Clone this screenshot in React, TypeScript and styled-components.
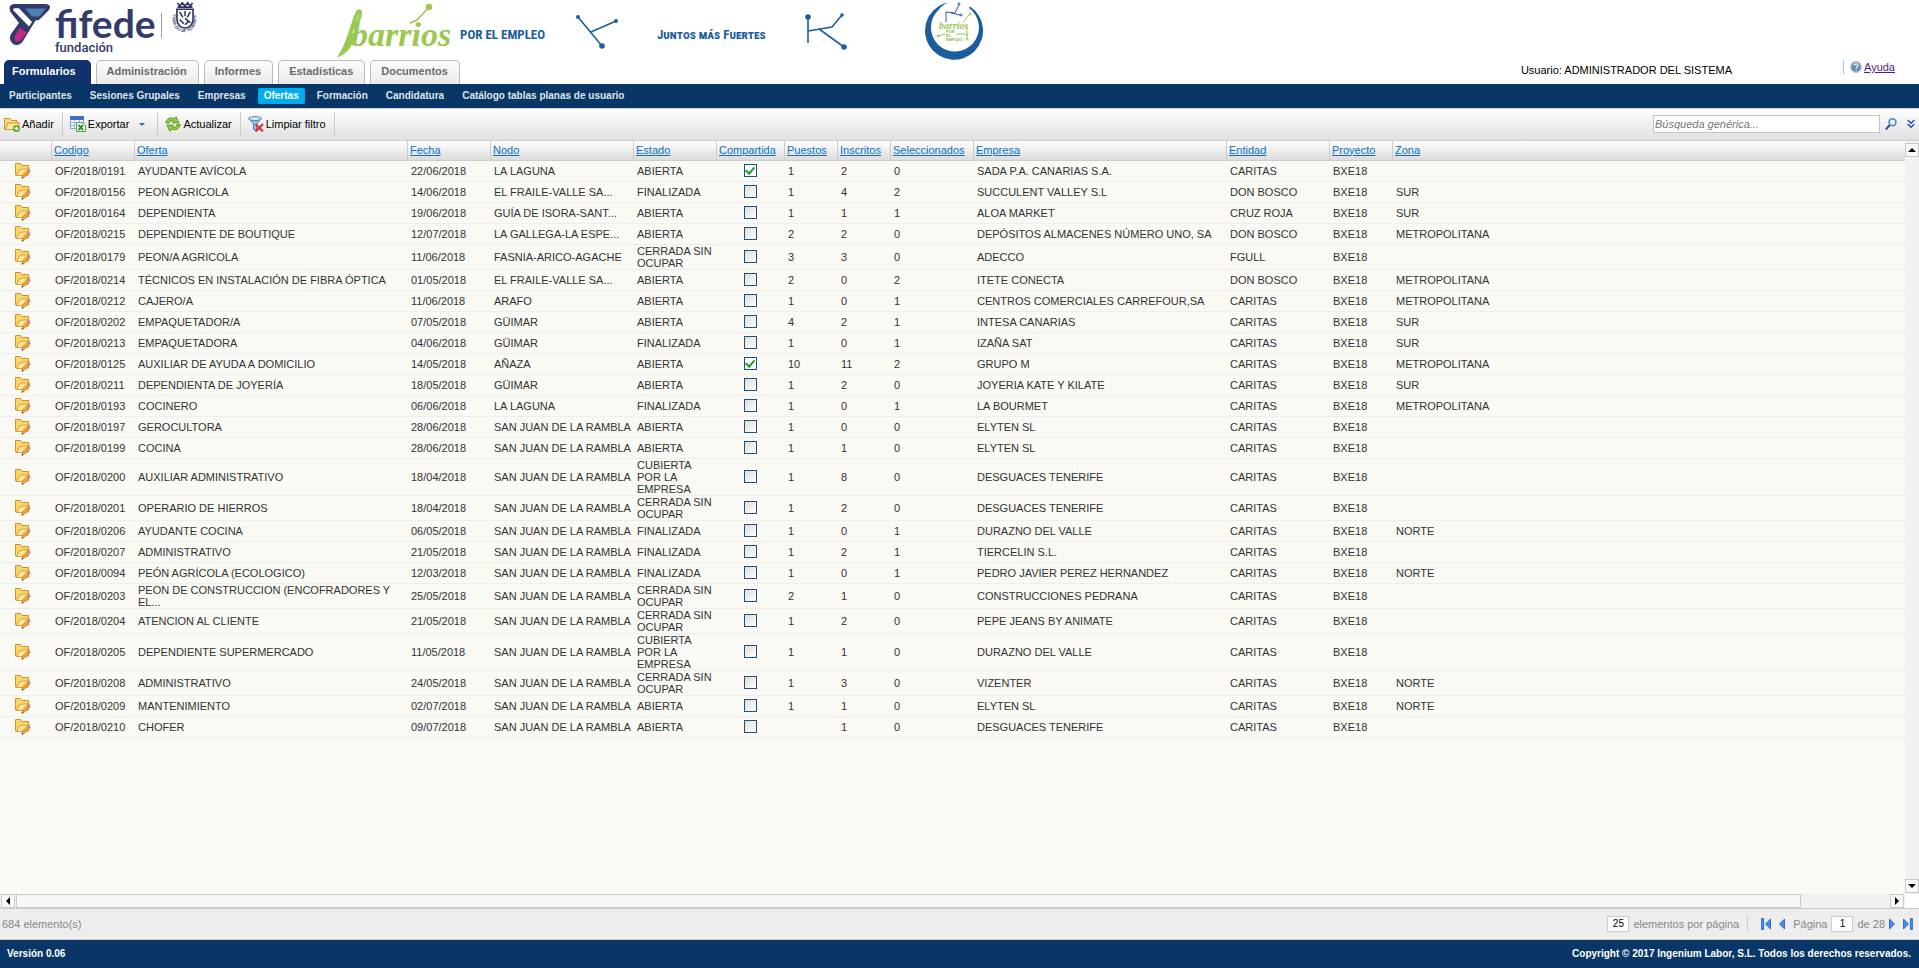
import React from "react";
import styled, { createGlobalStyle } from "styled-components";

const NAVY = "#083767";
const LINE = "#cccccc";

const GlobalStyle = createGlobalStyle`
  * { box-sizing: border-box; }
  body {
    margin: 0;
    background: #fff;
    color: #333;
    font: 11px/12px "Liberation Sans", Arial, sans-serif;
  }
  button, input { font: inherit; color: inherit; margin: 0; padding: 0; border: 0; background: none; }
  svg { display: block; flex: none; }
`;

/* ---------- page ---------- */

const Page = styled.div`
  display: flex;
  flex-direction: column;
  min-height: 100vh;
`;

const BrandBar = styled.header`
  display: flex;
  align-items: flex-start;
  height: 60px;
  padding-left: 9px;
`;

const BrandName = styled.div`
  display: flex;
  flex-direction: column;
  width: 104px;
  padding-top: 5px;
  margin-left: 5px;
  color: #333b6c;
`;

const BrandTitle = styled.span`
  font: bold 39px/36px Lato, sans-serif;
`;

const BrandSubtitle = styled.span`
  font: 500 13px/14px Roboto, sans-serif;
`;

const BrandRule = styled.span`
  width: 1px;
  height: 25px;
  margin: 13px 8px 0 2px;
  background: #9a9db5;
`;

const Campaign = styled.div`
  display: flex;
  align-items: flex-start;
  margin-left: 137px;
`;

const Slogan = styled.div<{ $caps?: boolean; $width: number }>`
  width: ${(p) => p.$width}px;
  margin-top: 27px;
  font: bold 13px/16px "Liberation Sans Narrow", "Roboto Condensed", "Liberation Sans", sans-serif;
  color: #1b5e9f;
  white-space: nowrap;
  font-variant-caps: ${(p) => (p.$caps ? "small-caps" : "normal")};
`;

const Spaced = styled.div<{ $before: number }>`
  margin-left: ${(p) => p.$before}px;
`;

/* ---------- navigation ---------- */

const TabBar = styled.div`
  display: flex;
  align-items: stretch;
  height: 24px;
  padding-left: 4px;
`;

const Tabs = styled.nav`
  display: flex;
  gap: 5px;
`;

const Tab = styled.a<{ $active?: boolean }>`
  display: flex;
  align-items: center;
  padding: ${(p) => (p.$active ? "0 14px 4px 7px" : "0 11px 4px 10px")};
  border: 1px solid ${(p) => (p.$active ? "#10326c" : "#bbb")};
  border-bottom: 0;
  border-radius: 5px 5px 0 0;
  background: ${(p) => (p.$active ? "#10326c" : "linear-gradient(#fdfdfd, #eaeaea)")};
  color: ${(p) => (p.$active ? "#fff" : "#6b6b6b")};
  font-weight: bold;
  text-decoration: none;
`;

const UserName = styled.div`
  margin: 4px 111px 0 auto;
  color: #000;
`;

const Help = styled.div`
  display: flex;
  align-items: center;
  height: 14px;
  margin-right: 24px;
  border-left: 1px solid #a9c3df;
  padding-left: 6px;
  gap: 2px;
`;

const HelpLink = styled.a`
  color: #551a8b;
`;

const SubNav = styled.nav`
  display: flex;
  align-items: center;
  gap: 6px;
  height: 24px;
  padding: 0 3px 1px;
  background: ${NAVY};
`;

const SubNavLink = styled.a<{ $active?: boolean }>`
  padding: 2px 6px;
  border-radius: 2px;
  background: ${(p) => (p.$active ? "#00aeef" : "transparent")};
  color: ${(p) => (p.$active ? "#fff" : "#dfe4ea")};
  font-size: 10px;
  font-weight: bold;
  text-decoration: none;
`;

/* ---------- toolbar ---------- */

const Toolbar = styled.div`
  display: flex;
  align-items: center;
  height: 33px;
  border-top: 1px solid #d4d0c8;
  border-bottom: 1px solid ${LINE};
  padding: 0 4px 1px;
  background: linear-gradient(#fff, #e0e0e0);
`;

const ToolButton = styled.button`
  display: flex;
  align-items: center;
  gap: 2px;
  height: 24px;
  padding-right: 8px;
  border-right: 1px solid ${LINE};
  margin-right: 7px;
  color: #000;
  cursor: pointer;
`;

const Caret = styled.span`
  margin: 0 4px 0 8px;
  border: 3px solid transparent;
  border-top-color: #2a62b8;
  border-bottom: 0;
`;

const SearchBox = styled.form`
  display: flex;
  align-items: center;
  margin-left: auto;
`;

const SearchInput = styled.input`
  width: 227px;
  height: 18px;
  margin-right: 5px;
  padding: 0 1px;
  border: 1px solid #c3c3c3;
  background: #fff;
  &::placeholder { color: #757575; font-style: italic; opacity: 1; }
`;

const IconButton = styled.button<{ $before?: number }>`
  display: block;
  margin-left: ${(p) => p.$before ?? 0}px;
  cursor: pointer;
`;

/* ---------- grid ---------- */

const GridArea = styled.div`
  display: flex;
  flex: 1;
  background: #faf9f4;
`;

const GridScroll = styled.div`
  flex: 1;
  min-width: 0;
  overflow: hidden;
`;

const Table = styled.table`
  width: 100%;
  table-layout: fixed;
  border-collapse: separate;
  border-spacing: 0;
`;

const Head = styled.th<{ $blank?: boolean }>`
  height: 20px;
  padding: 0 0 2px 2px;
  border-left: ${(p) => (p.$blank ? "0" : `1px solid ${LINE}`)};
  border-bottom: 1px solid ${LINE};
  background: linear-gradient(#fff, #dcdcdc);
  font-weight: normal;
  text-align: left;
  white-space: nowrap;
`;

const SortLink = styled.a`
  color: #0b70c8;
`;

const Cell = styled.td<{ $wrap?: boolean; $kind?: "icon" | "check" }>`
  height: 21px;
  padding: ${(p) => (p.$kind === "icon" ? "0 0 0 15px" : p.$kind === "check" ? "0 0 1px" : "0 0 0 4px")};
  border-bottom: 1px solid #eeeeee;
  text-align: ${(p) => (p.$kind === "check" ? "center" : "left")};
  white-space: ${(p) => (p.$wrap ? "normal" : "nowrap")};
`;

const Check = styled.input`
  display: flex;
  align-items: center;
  justify-content: center;
  appearance: none;
  width: 13px;
  height: 13px;
  margin: 0 auto;
  border: 1px solid #1c5180;
  background: linear-gradient(135deg, #dcdcd7, #fff);
  &:checked { background: #fff; }
  &:checked::after {
    content: "";
    width: 4px;
    height: 7px;
    margin-bottom: 2px;
    border: solid #21a121;
    border-width: 0 2px 2px 0;
    transform: rotate(40deg);
  }
`;

const VerticalBar = styled.div`
  display: flex;
  flex-direction: column;
  justify-content: space-between;
  width: 14px;
  padding: 2px 0 1px;
  background: #f1f1f1;
`;

const HorizontalBar = styled.div`
  display: flex;
  gap: 1px;
  height: 14px;
  padding: 0 15px 0 1px;
  background: linear-gradient(#fff, #fff) right / 14px 14px no-repeat #f1f1f1;
`;

const ScrollButton = styled.button`
  display: flex;
  align-items: center;
  justify-content: center;
  flex: none;
  width: 14px;
  height: 14px;
  border: 1px solid #c9c9c9;
  background: #f8f8f8;
`;

const ScrollTrack = styled.div`
  flex: 1;
  padding-right: 88px;
`;

const ScrollThumb = styled.div`
  height: 14px;
  border: 1px solid #c9c9c9;
  background: #f7f7f7;
`;

/* ---------- pager and footer ---------- */

const Pager = styled.div`
  display: flex;
  align-items: center;
  height: 32px;
  padding: 0 6px 1px 2px;
  border-top: 1px solid ${LINE};
  border-bottom: 1px solid ${LINE};
  background: #ededed;
  color: #888;
`;

const PagerControls = styled.div`
  display: flex;
  align-items: center;
  gap: 4px;
  margin-left: auto;
`;

const PagerField = styled.label`
  display: flex;
  align-items: center;
  gap: 4px;
`;

const PagerInput = styled.input`
  width: 22px;
  height: 16px;
  border: 1px solid ${LINE};
  background: #fff;
  color: #000;
  font-size: 10px;
  text-align: center;
`;

const PagerRule = styled.span`
  width: 1px;
  height: 17px;
  margin: 0 9px 0 4px;
  background: ${LINE};
`;

const PagerButton = styled.button`
  display: block;
  margin-right: 4px;
  &:last-child { margin-right: 0; }
`;

const Footer = styled.footer`
  display: flex;
  align-items: center;
  justify-content: space-between;
  height: 28px;
  padding: 0 8px 0 7px;
  background: ${NAVY};
  color: #fff;
  font-size: 10px;
  font-weight: bold;
`;

/* ---------- drawings ---------- */

const FifedeMark = () => (
  <svg width="41" height="46" viewBox="9 0 41 46">
    <path
      d="M14 4H46q6 1 3 6L41 18q-2 2.500-5 2.500H35.500L23 41q-4 6-10 3-5-4-2-10L19 23 10.500 12Q7.500 5 14 4z"
      fill="#333b6c"
    />
    <path d="M25 8.500H45.500L40.500 15.500q-1 1-2.500 1H32z" fill="#4a80b5" />
    <path d="M14.500 8.200H19L32 22l-3 4.500L13.500 10.500q-1-2 1-2.300z" fill="#fff" />
    <path d="M19.500 28l7.500 4.500L21 40q-3 3-6 .5-1.500-2 0-4.500z" fill="#c22a84" />
  </svg>
);

const CabildoCrest = () => (
  <svg width="30" height="40" viewBox="1 2 28 37">
    <defs>
      <path id="crest-ring" d="M4.500 15a11 12 0 1 0 20 0" />
    </defs>
    <g fill="none" stroke="#2a3060">
      <path d="M7.500 10.500h15v9.500a7.500 8 0 0 1-15 0z" strokeWidth="1.500" />
      <path d="M10 13l3 5M15 12v5M20 13l-3 5M10 20l4 4M15 19l5 4M15 25l3-3" strokeWidth="1.400" />
      <path d="M8 8.500h14M8 4.500l2 3 2.500-3 2.500 3 2.500-3 2.500 3 2-3" strokeWidth="1.500" />
    </g>
    <text fontFamily="Liberation Sans" fontSize="4" fontWeight="bold" fill="#4a5078">
      <textPath href="#crest-ring">CABILDO DE TENERIFE</textPath>
    </text>
  </svg>
);

const BarriosLogo = () => (
  <svg width="115" height="60" viewBox="336 0 115 60">
    <text x="350" y="46" fontFamily="Liberation Serif" fontSize="34" fontStyle="italic" fontWeight="bold" fill="#9bc853">
      barrios
    </text>
    <g fill="none" stroke="#9bc853" strokeLinecap="round">
      <path d="M357 12C352 20 350 38 341 53c4-2 9-10 12-18" strokeWidth="4" />
      <path d="M357 12c4-5 4 6-4 15" strokeWidth="3" />
      <path d="M409 23L416 20 428 7" strokeWidth="1.500" />
    </g>
    <circle cx="428" cy="7" r="3.200" fill="#9bc853" />
  </svg>
);

const BranchY = () => (
  <svg width="46" height="60" viewBox="573 0 46 60" fill="#1b5e9f" stroke="#1b5e9f" strokeWidth="1.600">
    <path d="M577 17L601 46M590 32L615 21" />
    <circle cx="577" cy="17" r="1.200" />
    <circle cx="615" cy="21" r="1.200" />
    <circle cx="601" cy="46" r="2" />
  </svg>
);

const BranchK = () => (
  <svg width="46" height="60" viewBox="804 0 46 60" fill="none" stroke="#1b5e9f" strokeWidth="1.600">
    <path d="M807 17V43M807 31L831 27 841 15M818 29L843 47" />
    <g fill="#1b5e9f">
      <circle cx="807" cy="17" r="2" />
      <circle cx="841" cy="15" r="1" />
      <circle cx="843" cy="47" r="2" />
    </g>
  </svg>
);

const RoundBadge = () => (
  <svg width="60" height="60" viewBox="923 0 60 60">
    <path
      d="M943 3.500A29 29 0 1 0 969 6.500L968 8A24 24 0 1 1 938 9.500Q940 6 946 3z"
      fill="#1b5e9f"
    />
    <g fill="none" stroke="#2f56a8">
      <path d="M945 22V12l9 1 4-8M950 13l9 2" />
      <circle cx="958" cy="4" r="1" />
      <circle cx="960" cy="15" r="1" />
    </g>
    <text x="938" y="29" fontFamily="Liberation Serif" fontStyle="italic" fontWeight="bold" fontSize="10" fill="#9bc853">barrios</text>
    <g fontFamily="Liberation Sans" fontWeight="bold" fill="#86bd3c">
      <text x="945" y="33" fontSize="4">POR</text>
      <text x="945" y="37" fontSize="4">EL</text>
      <text x="945" y="41" fontSize="4">EMPLEO</text>
    </g>
    <g fill="none" stroke="#9bc853">
      <path d="M962 22l7-8M937 36l7-2M955 34h11v4M966 28v8" />
      <circle cx="969" cy="14" r="1" />
      <circle cx="937" cy="36" r="1" />
      <circle cx="966" cy="39" r="1" />
    </g>
  </svg>
);

const HelpIcon = () => (
  <svg width="12" height="12" viewBox="0 0 12 12">
    <circle cx="6" cy="6" r="5.200" fill="#5d89c2" stroke="#b5bfcc" strokeWidth="1.500" />
    <path d="M4.300 4.700a1.800 1.800 0 1 1 2.500 1.600q-.7.4-.7 1.100M6.100 8.400v1" stroke="#fff" strokeWidth="1.200" fill="none" />
  </svg>
);

const AddFolderIcon = () => (
  <svg width="16" height="16" viewBox="0 0 16 16">
    <path d="M.5 13V2.500h5.500l1.500 2h5.500V13z" fill="#fbd879" stroke="#d3922c" />
    <path d="M1 13.500L4 7h11.500l-2.500 6.500z" fill="#fde9a4" stroke="#d3922c" />
    <circle cx="12.500" cy="12.500" r="3.500" fill="#58a50d" />
    <path d="M12.500 10.500v4M10.500 12.500h4" stroke="#fff" strokeWidth="1.500" />
  </svg>
);

const EditFolderIcon = () => (
  <svg width="16" height="16" viewBox="0 0 16 16">
    <path d="M.5 12V.5h5L7 2.500h6.500V12z" fill="#fbd566" stroke="#d3922c" />
    <path d="M1.500 12.500L4 7.500l3-1.500h8L12 12.500z" fill="#fde596" stroke="#d9a03c" />
    <path d="M7 15l1-3.500L13 6.500l2 2L10.300 13.500z" fill="#f2a531" stroke="#b5712c" strokeWidth=".6" />
    <path d="M12 7.500l1.300-1.300 2.300 2.300L14.300 9.800z" fill="#a98bc4" />
    <path d="M6.500 15.700l.7-2 1.300 1.300z" fill="#333" />
  </svg>
);

const ExportIcon = () => (
  <svg width="16" height="16" viewBox="0 0 16 16">
    <path d="M.5.5h13v12H.5z" fill="#fff" stroke="#7f9fd0" />
    <path d="M0 0h14v4H0z" fill="#3f6fce" />
    <path d="M0 6.500h14M0 9.500h14M4.500 4v9M9.500 4v9" stroke="#9db8de" />
    <path d="M6.500 6.500h6l3 2.500v6.500h-9z" fill="#e6f4e2" stroke="#5a9b50" />
    <path d="M8.500 9l4.500 5M13 9l-4.500 5" stroke="#268026" strokeWidth="1.800" />
  </svg>
);

const RefreshIcon = () => (
  <svg width="16" height="16" viewBox="0 0 16 16" fill="#8fd03c" stroke="#4c8f16" strokeWidth=".9" strokeLinejoin="round">
    <path d="M.8 7C1.500 2.500 5.500 1 9.500 2.500L11 .8l3 6-6.500.2 1.300-1.800C6.500 4.200 4.500 4.800 4 7z" />
    <path d="M15.200 8.500c-.7 4.500-4.700 6-8.700 4.500L5 15.200 2 9.200 8.500 9 7.200 10.800c2.300 1 4.300.4 4.800-2.300z" />
  </svg>
);

const FilterIcon = () => (
  <svg width="16" height="16" viewBox="0 0 16 16">
    <path d="M.8 2.500L5.500 8v5.500l3 1V8l4.800-5.500z" fill="#8cc4ec" stroke="#4480b8" />
    <ellipse cx="7" cy="2.600" rx="6.500" ry="1.900" fill="#d3ebfa" stroke="#4480b8" />
    <path d="M7.500 8l7.500 7.500M15 8l-7.500 7.500" stroke="#e3262a" strokeWidth="2" />
  </svg>
);

const SearchIcon = () => (
  <svg width="12" height="12" viewBox="0 0 12 12" fill="none">
    <path d="M.8 11.500l4-4.500" stroke="#224f94" strokeWidth="2" />
    <circle cx="7.500" cy="4.200" r="3.400" stroke="#3d8ac6" strokeWidth="1.600" fill="#e8f5fc" />
  </svg>
);

const ExpandIcon = () => (
  <svg width="8" height="10" viewBox="0 0 8 10" fill="none" stroke="#2746c4" strokeWidth="1.400">
    <path d="M.7 1L4 4.300 7.300 1M.7 5L4 8.300 7.300 5" />
  </svg>
);

type Dir = "up" | "down" | "left" | "right";
const arrows: Record<Dir, string> = {
  up: "M0 6L4 2l4 4z",
  down: "M0 2l4 4 4-4z",
  left: "M6 0L2 4l4 4z",
  right: "M2 0l4 4-4 4z",
};

const Arrow = ({ dir }: { dir: Dir }) => (
  <svg width="8" height="8" viewBox="0 0 8 8">
    <path d={arrows[dir]} fill="#000" />
  </svg>
);

const PageArrow = ({ back, end }: { back?: boolean; end?: boolean }) => (
  <svg width={end ? 10 : 6} height="12" viewBox={end ? "0 0 10 12" : "0 0 6 12"}>
    <g transform={back ? `translate(${end ? 10 : 6} 0) scale(-1 1)` : undefined} fill="#3f8cf0" stroke="#2358c4" strokeWidth=".8">
      <path d="M.5 1l5 5-5 5z" />
      {end && <path d="M7.400.5h2v11h-2z" />}
    </g>
  </svg>
);

/* ---------- data ---------- */

const columns: [string, number | undefined][] = [
  ["Codigo", 83],
  ["Oferta", 273],
  ["Fecha", 83],
  ["Nodo", 143],
  ["Estado", 83],
  ["Compartida", 68],
  ["Puestos", 53],
  ["Inscritos", 53],
  ["Seleccionados", 83],
  ["Empresa", 253],
  ["Entidad", 103],
  ["Proyecto", 63],
  ["Zona", undefined],
];

const RAMBLA = "SAN JUAN DE LA RAMBLA";
const SIN_OCUPAR = "CERRADA SIN OCUPAR";
const CUBIERTA = "CUBIERTA POR LA EMPRESA";

type Offer = [string, string, string, string, string, boolean, string, string, string, string, string, string];

const offers: Offer[] = [
  ["0191", "AYUDANTE AVÍCOLA", "22/06/2018", "LA LAGUNA", "ABIERTA", true, "1", "2", "0", "SADA P.A. CANARIAS S.A.", "CARITAS", ""],
  ["0156", "PEON AGRICOLA", "14/06/2018", "EL FRAILE-VALLE SA...", "FINALIZADA", false, "1", "4", "2", "SUCCULENT VALLEY S.L", "DON BOSCO", "SUR"],
  ["0164", "DEPENDIENTA", "19/06/2018", "GUÍA DE ISORA-SANT...", "ABIERTA", false, "1", "1", "1", "ALOA MARKET", "CRUZ ROJA", "SUR"],
  ["0215", "DEPENDIENTE DE BOUTIQUE", "12/07/2018", "LA GALLEGA-LA ESPE...", "ABIERTA", false, "2", "2", "0", "DEPÓSITOS ALMACENES NÚMERO UNO, SA", "DON BOSCO", "METROPOLITANA"],
  ["0179", "PEON/A AGRICOLA", "11/06/2018", "FASNIA-ARICO-AGACHE", SIN_OCUPAR, false, "3", "3", "0", "ADECCO", "FGULL", ""],
  ["0214", "TÉCNICOS EN INSTALACIÓN DE FIBRA ÓPTICA", "01/05/2018", "EL FRAILE-VALLE SA...", "ABIERTA", false, "2", "0", "2", "ITETE CONECTA", "DON BOSCO", "METROPOLITANA"],
  ["0212", "CAJERO/A", "11/06/2018", "ARAFO", "ABIERTA", false, "1", "0", "1", "CENTROS COMERCIALES CARREFOUR,SA", "CARITAS", "METROPOLITANA"],
  ["0202", "EMPAQUETADOR/A", "07/05/2018", "GÜIMAR", "ABIERTA", false, "4", "2", "1", "INTESA CANARIAS", "CARITAS", "SUR"],
  ["0213", "EMPAQUETADORA", "04/06/2018", "GÜIMAR", "FINALIZADA", false, "1", "0", "1", "IZAÑA SAT", "CARITAS", "SUR"],
  ["0125", "AUXILIAR DE AYUDA A DOMICILIO", "14/05/2018", "AÑAZA", "ABIERTA", true, "10", "11", "2", "GRUPO M", "CARITAS", "METROPOLITANA"],
  ["0211", "DEPENDIENTA DE JOYERÍA", "18/05/2018", "GÜIMAR", "ABIERTA", false, "1", "2", "0", "JOYERIA KATE Y KILATE", "CARITAS", "SUR"],
  ["0193", "COCINERO", "06/06/2018", "LA LAGUNA", "FINALIZADA", false, "1", "0", "1", "LA BOURMET", "CARITAS", "METROPOLITANA"],
  ["0197", "GEROCULTORA", "28/06/2018", RAMBLA, "ABIERTA", false, "1", "0", "0", "ELYTEN SL", "CARITAS", ""],
  ["0199", "COCINA", "28/06/2018", RAMBLA, "ABIERTA", false, "1", "1", "0", "ELYTEN SL", "CARITAS", ""],
  ["0200", "AUXILIAR ADMINISTRATIVO", "18/04/2018", RAMBLA, CUBIERTA, false, "1", "8", "0", "DESGUACES TENERIFE", "CARITAS", ""],
  ["0201", "OPERARIO DE HIERROS", "18/04/2018", RAMBLA, SIN_OCUPAR, false, "1", "2", "0", "DESGUACES TENERIFE", "CARITAS", ""],
  ["0206", "AYUDANTE COCINA", "06/05/2018", RAMBLA, "FINALIZADA", false, "1", "0", "1", "DURAZNO DEL VALLE", "CARITAS", "NORTE"],
  ["0207", "ADMINISTRATIVO", "21/05/2018", RAMBLA, "FINALIZADA", false, "1", "2", "1", "TIERCELIN S.L.", "CARITAS", ""],
  ["0094", "PEÓN AGRÍCOLA (ECOLOGICO)", "12/03/2018", RAMBLA, "FINALIZADA", false, "1", "0", "1", "PEDRO JAVIER PEREZ HERNANDEZ", "CARITAS", "NORTE"],
  ["0203", "PEON DE CONSTRUCCION (ENCOFRADORES Y EL...", "25/05/2018", RAMBLA, SIN_OCUPAR, false, "2", "1", "0", "CONSTRUCCIONES PEDRANA", "CARITAS", ""],
  ["0204", "ATENCION AL CLIENTE", "21/05/2018", RAMBLA, SIN_OCUPAR, false, "1", "2", "0", "PEPE JEANS BY ANIMATE", "CARITAS", ""],
  ["0205", "DEPENDIENTE SUPERMERCADO", "11/05/2018", RAMBLA, CUBIERTA, false, "1", "1", "0", "DURAZNO DEL VALLE", "CARITAS", ""],
  ["0208", "ADMINISTRATIVO", "24/05/2018", RAMBLA, SIN_OCUPAR, false, "1", "3", "0", "VIZENTER", "CARITAS", "NORTE"],
  ["0209", "MANTENIMIENTO", "02/07/2018", RAMBLA, "ABIERTA", false, "1", "1", "0", "ELYTEN SL", "CARITAS", "NORTE"],
  ["0210", "CHOFER", "09/07/2018", RAMBLA, "ABIERTA", false, "", "1", "0", "DESGUACES TENERIFE", "CARITAS", ""],
];

const tabs = ["Formularios", "Administración", "Informes", "Estadísticas", "Documentos"];
const sections = [
  "Participantes",
  "Sesiones Grupales",
  "Empresas",
  "Ofertas",
  "Formación",
  "Candidatura",
  "Catálogo tablas planas de usuario",
];

const OfferRow = ({ offer }: { offer: Offer }) => {
  const [num, title, date, node, state, shared, posts, enrolled, chosen, company, entity, zone] = offer;
  const code = `OF/2018/${num}`;
  return (
    <tr>
      <Cell $kind="icon">
        <IconButton type="button" aria-label={`Editar ${code}`}>
          <EditFolderIcon />
        </IconButton>
      </Cell>
      <Cell>{code}</Cell>
      <Cell $wrap>{title}</Cell>
      <Cell>{date}</Cell>
      <Cell>{node}</Cell>
      <Cell $wrap>{state}</Cell>
      <Cell $kind="check">
        <Check type="checkbox" defaultChecked={shared} aria-label={`Compartida ${code}`} />
      </Cell>
      <Cell>{posts}</Cell>
      <Cell>{enrolled}</Cell>
      <Cell>{chosen}</Cell>
      <Cell>{company}</Cell>
      <Cell>{entity}</Cell>
      <Cell>BXE18</Cell>
      <Cell>{zone}</Cell>
    </tr>
  );
};

export default function App() {
  return (
    <Page>
      <GlobalStyle />
      <BrandBar>
        <FifedeMark />
        <BrandName>
          <BrandTitle>fifede</BrandTitle>
          <BrandSubtitle>fundación</BrandSubtitle>
        </BrandName>
        <BrandRule />
        <CabildoCrest />
        <Campaign>
          <BarriosLogo />
          <Spaced $before={8}>
            <Slogan $width={78}>POR EL EMPLEO</Slogan>
          </Spaced>
          <Spaced $before={36}><BranchY /></Spaced>
          <Spaced $before={37}>
            <Slogan $caps $width={110}>Juntos más Fuertes</Slogan>
          </Spaced>
          <Spaced $before={38}><BranchK /></Spaced>
          <Spaced $before={73}><RoundBadge /></Spaced>
        </Campaign>
      </BrandBar>

      <TabBar>
        <Tabs>
          {tabs.map((t, i) => (
            <Tab key={t} href="#" $active={i === 0}>{t}</Tab>
          ))}
        </Tabs>
        <UserName>Usuario: ADMINISTRADOR DEL SISTEMA</UserName>
        <Help>
          <HelpIcon />
          <HelpLink href="#">Ayuda</HelpLink>
        </Help>
      </TabBar>

      <SubNav>
        {sections.map((s) => (
          <SubNavLink key={s} href="#" $active={s === "Ofertas"}>{s}</SubNavLink>
        ))}
      </SubNav>

      <Toolbar>
        <ToolButton type="button"><AddFolderIcon />Añadir</ToolButton>
        <ToolButton type="button"><ExportIcon />Exportar<Caret /></ToolButton>
        <ToolButton type="button"><RefreshIcon />Actualizar</ToolButton>
        <ToolButton type="button"><FilterIcon />Limpiar filtro</ToolButton>
        <SearchBox onSubmit={(e) => e.preventDefault()}>
          <SearchInput type="text" placeholder="Búsqueda genérica..." aria-label="Búsqueda genérica" />
          <IconButton type="submit" aria-label="Buscar"><SearchIcon /></IconButton>
          <IconButton type="button" aria-label="Más filtros" $before={10}><ExpandIcon /></IconButton>
        </SearchBox>
      </Toolbar>

      <GridArea>
        <GridScroll>
          <Table>
            <colgroup>
              <col style={{ width: 51 }} />
              {columns.map(([name, width]) => (
                <col key={name} style={{ width }} />
              ))}
            </colgroup>
            <thead>
              <tr>
                <Head $blank />
                {columns.map(([name]) => (
                  <Head key={name} scope="col"><SortLink href="#">{name}</SortLink></Head>
                ))}
              </tr>
            </thead>
            <tbody>
              {offers.map((o) => (
                <OfferRow key={o[0]} offer={o} />
              ))}
            </tbody>
          </Table>
        </GridScroll>
        <VerticalBar>
          <ScrollButton type="button" aria-label="Subir"><Arrow dir="up" /></ScrollButton>
          <ScrollButton type="button" aria-label="Bajar"><Arrow dir="down" /></ScrollButton>
        </VerticalBar>
      </GridArea>
      <HorizontalBar>
        <ScrollButton type="button" aria-label="Izquierda"><Arrow dir="left" /></ScrollButton>
        <ScrollTrack><ScrollThumb /></ScrollTrack>
        <ScrollButton type="button" aria-label="Derecha"><Arrow dir="right" /></ScrollButton>
      </HorizontalBar>

      <Pager>
        <span>684 elemento(s)</span>
        <PagerControls>
          <PagerField>
            <PagerInput type="text" defaultValue="25" />
            elementos por página
          </PagerField>
          <PagerRule />
          <PagerButton type="button" aria-label="Primera página"><PageArrow back end /></PagerButton>
          <PagerButton type="button" aria-label="Página anterior"><PageArrow back /></PagerButton>
          <PagerField>
            Página
            <PagerInput type="text" defaultValue="1" />
            de 28
          </PagerField>
          <PagerButton type="button" aria-label="Página siguiente"><PageArrow /></PagerButton>
          <PagerButton type="button" aria-label="Última página"><PageArrow end /></PagerButton>
        </PagerControls>
      </Pager>

      <Footer>
        <span>Versión 0.06</span>
        <span>Copyright © 2017 Ingenium Labor, S.L. Todos los derechos reservados.</span>
      </Footer>
    </Page>
  );
}
